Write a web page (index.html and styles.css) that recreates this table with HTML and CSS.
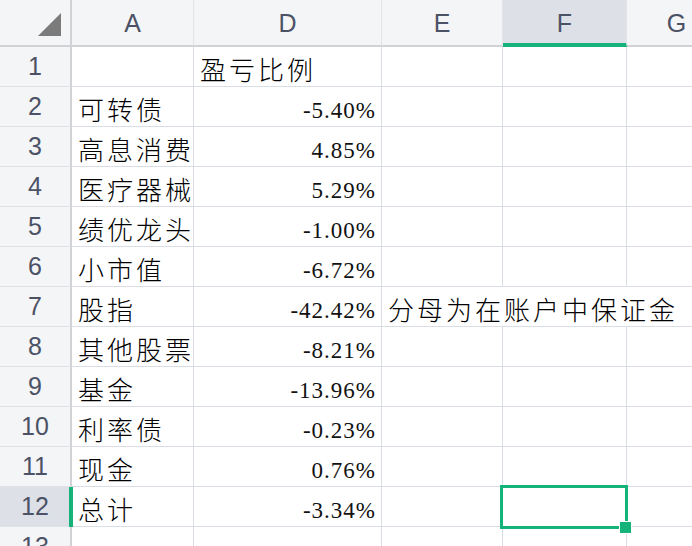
FILE: index.html
```html
<!DOCTYPE html>
<html lang="zh">
<head>
<meta charset="utf-8">
<title>Sheet</title>
<link rel="stylesheet" href="styles.css">
</head>
<body>
<div class="sheet">
  <div class="corner"><svg width="72" height="47" viewBox="0 0 72 47"><polygon points="38,36 61,13 61,36" fill="#7b7b7b"/></svg></div>
  <div class="colhead">A</div>
  <div class="colhead">D</div>
  <div class="colhead">E</div>
  <div class="colhead sel">F</div>
  <div class="colhead">G</div>

  <div class="rowhead">1</div><div class="cell"></div><div class="cell txt">盈亏比例</div><div class="cell"></div><div class="cell"></div><div class="cell"></div>
  <div class="rowhead">2</div><div class="cell txt">可转债</div><div class="cell num">-5.40%</div><div class="cell"></div><div class="cell"></div><div class="cell"></div>
  <div class="rowhead">3</div><div class="cell txt">高息消费</div><div class="cell num">4.85%</div><div class="cell"></div><div class="cell"></div><div class="cell"></div>
  <div class="rowhead">4</div><div class="cell txt">医疗器械</div><div class="cell num">5.29%</div><div class="cell"></div><div class="cell"></div><div class="cell"></div>
  <div class="rowhead">5</div><div class="cell txt">绩优龙头</div><div class="cell num">-1.00%</div><div class="cell"></div><div class="cell"></div><div class="cell"></div>
  <div class="rowhead">6</div><div class="cell txt">小市值</div><div class="cell num">-6.72%</div><div class="cell"></div><div class="cell"></div><div class="cell"></div>
  <div class="rowhead">7</div><div class="cell txt">股指</div><div class="cell num">-42.42%</div><div class="cell txt span3">分母为在账户中保证金</div>
  <div class="rowhead">8</div><div class="cell txt">其他股票</div><div class="cell num">-8.21%</div><div class="cell"></div><div class="cell"></div><div class="cell"></div>
  <div class="rowhead">9</div><div class="cell txt">基金</div><div class="cell num">-13.96%</div><div class="cell"></div><div class="cell"></div><div class="cell"></div>
  <div class="rowhead">10</div><div class="cell txt">利率债</div><div class="cell num">-0.23%</div><div class="cell"></div><div class="cell"></div><div class="cell"></div>
  <div class="rowhead">11</div><div class="cell txt">现金</div><div class="cell num">0.76%</div><div class="cell"></div><div class="cell"></div><div class="cell"></div>
  <div class="rowhead selrow">12</div><div class="cell txt">总计</div><div class="cell num">-3.34%</div><div class="cell"></div><div class="cell"></div><div class="cell"></div>
  <div class="rowhead">13</div><div class="cell"></div><div class="cell"></div><div class="cell"></div><div class="cell"></div><div class="cell"></div>

  <div class="selection"></div>
  <div class="handle"></div>
</div>
</body>
</html>
```

FILE: styles.css
```css
html, body {
  margin: 0;
  padding: 0;
  background: #ffffff;
}
body {
  width: 692px;
  height: 546px;
  overflow: hidden;
}
.sheet {
  position: relative;
  display: grid;
  grid-template-columns: 72px 122px 188px 121px 124px 100px;
  grid-template-rows: 47px;
  grid-auto-rows: 40px;
  width: max-content;
}
.sheet > div {
  box-sizing: border-box;
}
.corner {
  background: #f4f5f7;
  border-right: 2px solid #d0d2d6;
  border-bottom: 2px solid #d0d2d6;
}
.corner svg {
  display: block;
}
.colhead {
  background: #f4f5f7;
  border-right: 1px solid #e3e4e8;
  border-bottom: 2px solid #d0d2d6;
  display: flex;
  align-items: center;
  justify-content: center;
  padding-top: 2px;
  font-family: "Liberation Sans", Arial, sans-serif;
  font-size: 25px;
  color: #4c5265;
}
.colhead.sel {
  background: #dde0e7;
  border-bottom: 4px solid #15b37a;
  padding-top: 4px;
}
.rowhead {
  position: relative;
  background: #f4f5f7;
  border-right: 2px solid #d0d2d6;
  border-bottom: 1px solid #dfe1e6;
  display: flex;
  align-items: center;
  justify-content: center;
  font-family: "Liberation Sans", Arial, sans-serif;
  font-size: 25px;
  color: #4c5265;
}
.rowhead.selrow {
  background: #dde0e7;
}
.rowhead.selrow::after {
  content: "";
  position: absolute;
  right: -3px;
  top: 0;
  bottom: -1px;
  width: 4px;
  background: #15b37a;
}
.cell {
  border-right: 1px solid #d9dde6;
  border-bottom: 1px solid #d9dde6;
  display: flex;
  align-items: flex-end;
  white-space: nowrap;
  color: #000;
  line-height: 1;
}
.txt {
  font-family: "Noto Sans CJK SC", "Liberation Serif", sans-serif;
  font-weight: 300;
  font-size: 26px;
  letter-spacing: 3px;
  padding: 0 0 4px 6px;
}
.num {
  justify-content: flex-end;
  font-family: "Liberation Serif", "Times New Roman", serif;
  font-size: 23px;
  letter-spacing: 1px;
  padding: 0 5px 4px 0;
  color: #111;
}
.span3 {
  grid-column: span 3;
}
.selection {
  position: absolute;
  left: 500px;
  top: 485px;
  width: 128px;
  height: 44px;
  border: 3px solid #15b37a;
}
.handle {
  position: absolute;
  left: 619px;
  top: 521px;
  width: 13px;
  height: 13px;
  background: #15b37a;
  border: 1px solid #ffffff;
}
```
